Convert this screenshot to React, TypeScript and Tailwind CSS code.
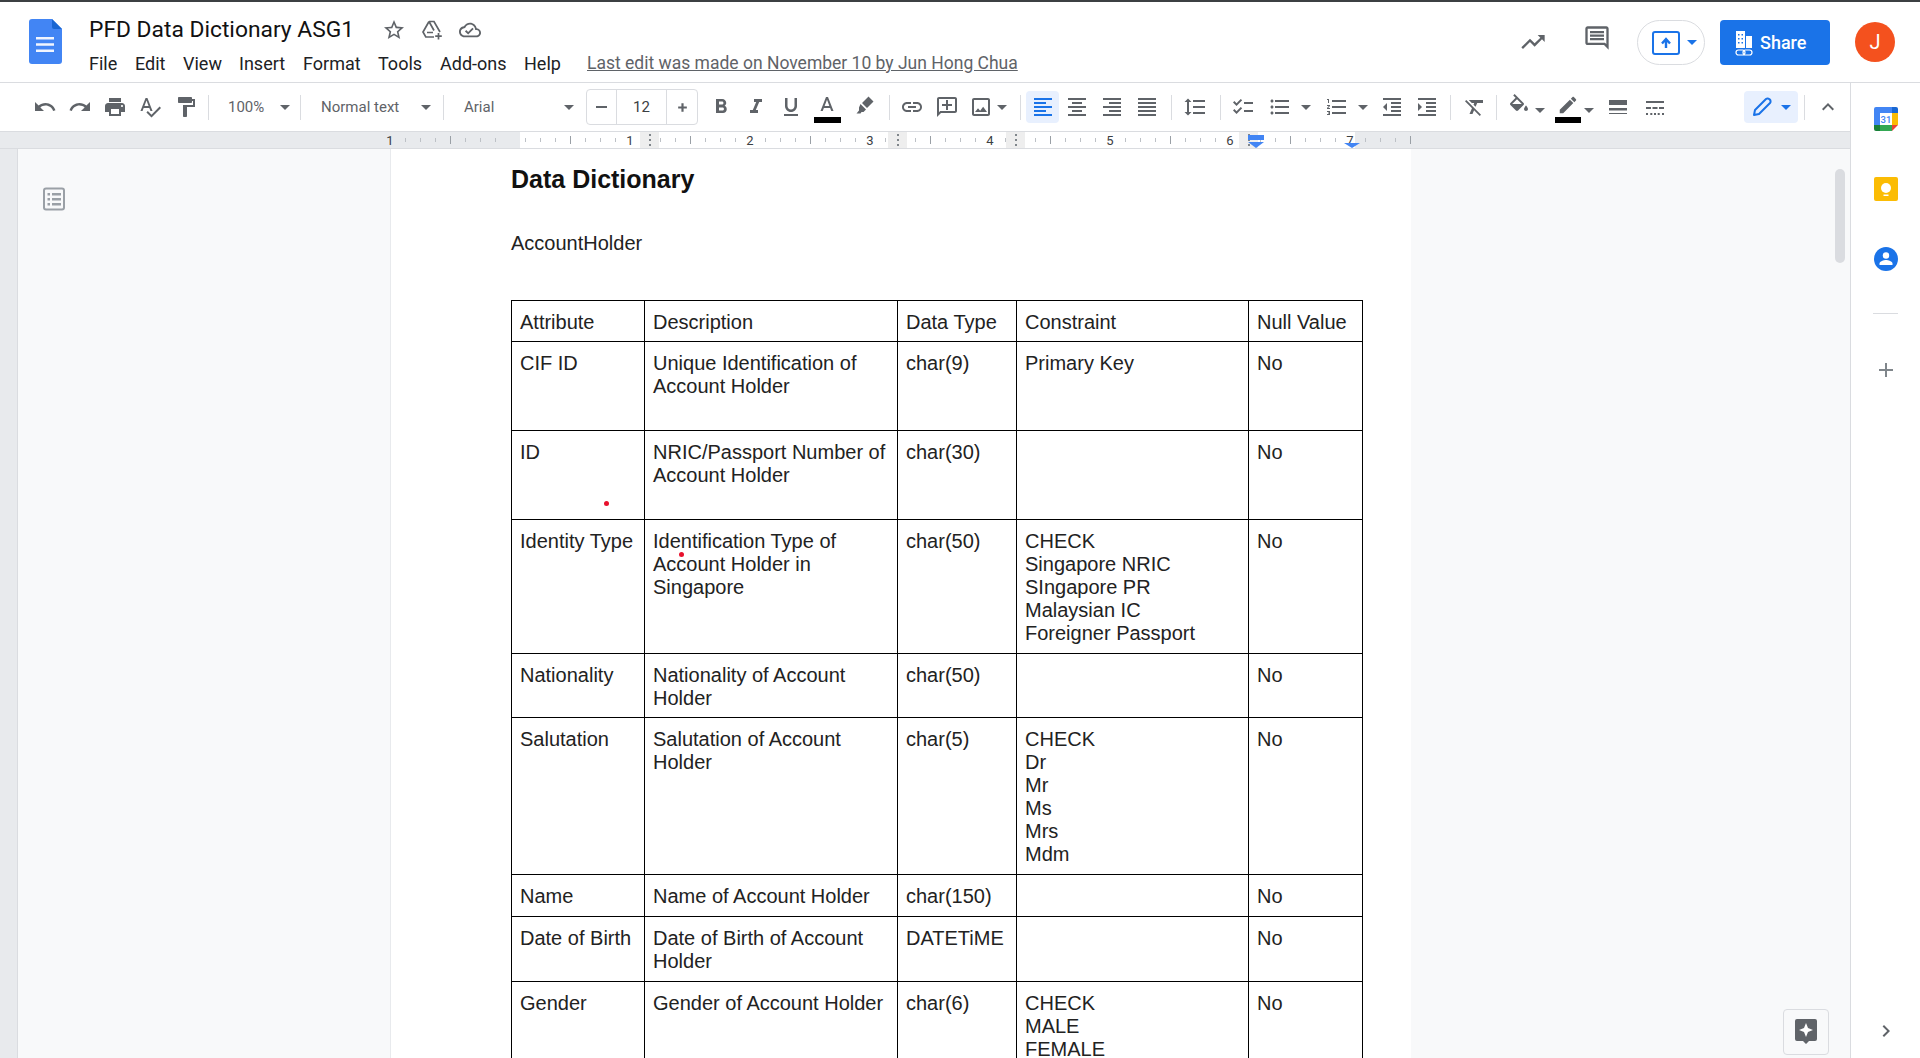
import React from "react";

const I = ({ d, c = "#5f6368", s = 24 }: { d: string; c?: string; s?: number }) => (
  <svg width={s} height={s} viewBox="0 0 24 24" fill={c}><path d={d} /></svg>
);

const P = {
  undo: "M12.5 8c-2.65 0-5.05.99-6.9 2.6L2 7v9h9l-3.62-3.62c1.39-1.16 3.16-1.88 5.12-1.88 3.54 0 6.55 2.31 7.6 5.5l2.37-.78C21.08 11.03 17.15 8 12.5 8z",
  redo: "M18.4 10.6C16.55 8.99 14.15 8 11.5 8c-4.65 0-8.58 3.03-9.96 7.22L3.9 16c1.05-3.19 4.05-5.5 7.6-5.5 1.95 0 3.73.72 5.12 1.88L13 16h9V7l-3.6 3.6z",
  print: "M19 8H5c-1.66 0-3 1.34-3 3v6h4v4h12v-4h4v-6c0-1.66-1.34-3-3-3zm-3 11H8v-5h8v5zm3-7c-.55 0-1-.45-1-1s.45-1 1-1 1 .45 1 1-.45 1-1 1zm-1-9H6v4h12V3z",
  spell: "M12.45 16h2.09L9.43 3H7.57L2.46 16h2.09l1.12-3h5.64l1.14 3zm-6.02-5L8.5 5.48 10.57 11H6.43zm15.16.59l-8.09 8.09L9.83 16l-1.41 1.41 5.09 5.09L23 13l-1.41-1.41z",
  paint: "M18 4V3c0-.55-.45-1-1-1H5c-.55 0-1 .45-1 1v4c0 .55.45 1 1 1h12c.55 0 1-.45 1-1V6h1v4H9v11c0 .55.45 1 1 1h2c.55 0 1-.45 1-1v-9h8V4h-3z",
  bold: "M15.6 10.79c.97-.67 1.65-1.77 1.65-2.79 0-2.26-1.75-4-4-4H7v14h7.04c2.09 0 3.71-1.7 3.71-3.79 0-1.52-.86-2.82-2.15-3.42zM10 6.5h3c.83 0 1.5.67 1.5 1.5s-.67 1.5-1.5 1.5h-3v-3zm3.5 9H10v-3h3.5c.83 0 1.5.67 1.5 1.5s-.67 1.5-1.5 1.5z",
  italic: "M10 4v3h2.21l-3.42 8H6v3h8v-3h-2.21l3.42-8H18V4z",
  under: "M12 17c3.31 0 6-2.69 6-6V3h-2.5v8c0 1.93-1.57 3.5-3.5 3.5S8.5 12.93 8.5 11V3H6v8c0 3.31 2.69 6 6 6zm-7 2v2h14v-2H5z",
  a: "M11 3L5.5 17h2.25l1.12-3h6.25l1.12 3h2.25L13 3h-2zm-1.38 9L12 5.67 14.38 12H9.62z",
  marker: "M15.5 3.5l5 5-6.5 6.5-5-5zM7.5 11l5.5 5.500-2.500 2.500H8.500L7.500 20.500H3.500L6 17.500V14.500z",
  link: "M3.9 12c0-1.71 1.39-3.1 3.1-3.1h4V7H7c-2.76 0-5 2.24-5 5s2.24 5 5 5h4v-1.9H7c-1.71 0-3.1-1.39-3.1-3.1zM8 13h8v-2H8v2zm9-6h-4v1.9h4c1.71 0 3.1 1.39 3.1 3.1s-1.39 3.1-3.1 3.1h-4V17h4c2.76 0 5-2.24 5-5s-2.24-5-5-5z",
  addc: "M20 2H4c-1.1 0-2 .9-2 2v18l4-4h14c1.1 0 2-.9 2-2V4c0-1.1-.9-2-2-2zm0 14H5.170L4 17.170V4h16v12zM11 5h2v4h4v2h-4v4h-2v-4H7V9h4z",
  img: "M19 5v14H5V5h14m0-2H5c-1.1 0-2 .9-2 2v14c0 1.1.9 2 2 2h14c1.1 0 2-.9 2-2V5c0-1.1-.9-2-2-2zM14.140 11.860l-3 3.870L9 13.140 6 17h12l-3.860-5.140z",
  left: "M15 15H3v2h12v-2zm0-8H3v2h12V7zM3 13h18v-2H3v2zm0 8h18v-2H3v2zM3 3v2h18V3H3z",
  center: "M7 15v2h10v-2H7zm-4 6h18v-2H3v2zm0-8h18v-2H3v2zm4-6v2h10V7H7zM3 3v2h18V3H3z",
  right: "M3 21h18v-2H3v2zm6-4h12v-2H9v2zm-6-4h18v-2H3v2zm6-4h12V7H9v2zM3 3v2h18V3H3z",
  just: "M3 21h18v-2H3v2zm0-4h18v-2H3v2zm0-4h18v-2H3v2zm0-4h18V7H3v2zm0-6v2h18V3H3z",
  spacing: "M6 7h2.5L5 3.5 1.500 7H4v10H1.500L5 20.500 8.500 17H6V7zm4-2v2h12V5H10zm0 14h12v-2H10v2zm0-6h12v-2H10v2z",
  check: "M22 7h-9v2h9V7zm0 8h-9v2h9v-2zM5.540 11L2 7.460l1.410-1.410 2.120 2.120 4.240-4.240 1.410 1.410L5.540 11zm0 8L2 15.460l1.410-1.410 2.120 2.120 4.240-4.240 1.410 1.410L5.540 19z",
  bullet: "M4 10.500c-.83 0-1.500.67-1.500 1.500s.67 1.500 1.500 1.500 1.500-.67 1.500-1.500-.67-1.500-1.500-1.500zm0-6c-.83 0-1.500.67-1.500 1.500S3.170 7.500 4 7.500 5.500 6.830 5.500 6 4.830 4.500 4 4.500zm0 12c-.83 0-1.500.68-1.500 1.500s.68 1.500 1.500 1.500 1.500-.68 1.500-1.500-.67-1.500-1.500-1.500zM7 19h14v-2H7v2zm0-6h14v-2H7v2zm0-8v2h14V5H7z",
  num: "M2 17h2v.5H3v1h1v.5H2v1h3v-4H2v1zm1-9h1V4H2v1h1v3zm-1 3h1.800L2 13.100v.9h3v-1H3.200L5 10.900V10H2v1zm5-6v2h14V5H7zm0 14h14v-2H7v2zm0-6h14v-2H7v2z",
  indd: "M11 17h10v-2H11v2zm-8-5l4 4V8l-4 4zm0 9h18v-2H3v2zM3 3v2h18V3H3zm8 6h10V7H11v2zm0 4h10v-2H11v2z",
  indi: "M3 21h18v-2H3v2zM3 8v8l4-4-4-4zm8 9h10v-2H11v2zM3 3v2h18V3H3zm8 6h10V7H11v2zm0 4h10v-2H11v2z",
  clear: "M3.270 5L2 6.270l6.970 6.970L6.500 19h3l1.570-3.660L16.730 21 18 19.730 3.550 5.270 3.270 5zM6 5v.18L8.820 8h2.400l-.72 1.680 2.100 2.100L14.210 8H20V5H6z",
  fill: "M16.560 8.940L7.620 0 6.210 1.410l2.380 2.380-5.150 5.150c-.59.59-.59 1.540 0 2.120l5.500 5.500c.29.29.68.44 1.060.44s.77-.15 1.060-.44l5.500-5.500c.59-.58.59-1.530 0-2.120zM5.210 10L10 5.210 14.790 10H5.210zM19 11.500s-2 2.170-2 3.500c0 1.100.9 2 2 2s2-.9 2-2c0-1.330-2-3.500-2-3.500z",
  pencil: "M3 17.250V21h3.750L17.810 9.940l-3.750-3.750L3 17.250zM20.710 7.040c.39-.39.39-1.020 0-1.410l-2.340-2.340c-.39-.39-1.020-.39-1.410 0l-1.830 1.830 3.750 3.750 1.830-1.830z",
  weight: "M3 5h18v5H3zM3 13h18v2.500H3zM3 18h18v1H3z",
  dash: "M3 6h18v2H3zM3 12h5v2H3zM9.500 12h5v2h-5zM16 12h5v2h-5zM3 18h2v2H3zM7.300 18h2v2h-2zM11 18h2v2h-2zM14.700 18h2v2h-2zM19 18h2v2h-2z",
  up: "M7.410 15.410L12 10.830l4.590 4.580L18 14l-6-6-6 6z",
  star: "M22 9.240l-7.190-.62L12 2 9.190 8.630 2 9.240l5.460 4.730L5.820 21 12 17.270 18.180 21l-1.630-7.030L22 9.240zM12 15.400l-3.760 2.270 1-4.280-3.320-2.880 4.380-.38L12 6.100l1.710 4.040 4.380.38-3.320 2.880 1 4.280L12 15.400z",
  cloud: "M19.350 10.040C18.670 6.590 15.640 4 12 4 9.110 4 6.600 5.640 5.350 8.040 2.340 8.360 0 10.910 0 14c0 3.310 2.690 6 6 6h13c2.760 0 5-2.240 5-5 0-2.640-2.050-4.780-4.650-4.960zM19 18H6c-2.210 0-4-1.790-4-4 0-2.050 1.530-3.760 3.560-3.970l1.070-.11.5-.95C8.080 7.140 9.940 6 12 6c2.620 0 4.880 1.860 5.390 4.430l.3 1.500 1.530.11c1.560.1 2.780 1.410 2.780 2.960 0 1.650-1.350 3-3 3zm-9-3.820l-2.090-2.090L6.500 13.500 10 17l6.010-6.010-1.410-1.410z",
  trend: "M16 6l2.290 2.290-4.880 4.880-4-4L2 16.590 3.410 18l6-6 4 4 6.300-6.290L22 12V6z",
  comment: "M21.990 4c0-1.100-.89-2-1.990-2H4c-1.100 0-2 .9-2 2v12c0 1.100.9 2 2 2h14l4 4-.01-18zM20 4v13.170L18.830 16H4V4h16zM6 12h12v2H6zm0-3h12v2H6zm0-3h12v2H6z",
};

const Slot = ({ className = "", children }: { className?: string; children: React.ReactNode }) => (
  <div className={`flex items-center justify-center shrink-0 ${className}`}>{children}</div>
);
const Sep = ({ className = "" }: { className?: string }) => (
  <div className={`w-px h-[25px] bg-[#dadce0] shrink-0 ${className}`} />
);
const Arrow = ({ className = "", c = "#5f6368" }: { className?: string; c?: string }) => (
  <div className={`w-[10px] shrink-0 ${className}`}>
    <svg width="10" height="5" viewBox="0 0 10 5" fill={c} className="block"><path d="M0 0h10L5 5z" /></svg>
  </div>
);

const Header = () => (
  <header className="h-[83px] shrink-0 flex border-t-2 border-b border-t-[#3c4043] border-b-[#dadce0] bg-white font-['Roboto',sans-serif]">
    <div className="w-[89px] pl-[29px] pt-[17px] shrink-0">
      <svg width="33" height="45" viewBox="0 0 33 45">
        <path d="M3 0h20l10 10v32a3 3 0 0 1-3 3H3a3 3 0 0 1-3-3V3a3 3 0 0 1 3-3z" fill="#4285f4" />
        <path d="M23 0l10 10H25a2 2 0 0 1-2-2z" fill="#1a66d2" />
        <path d="M7 18h18v2.600H7zM7 24.200h18v2.600H7zM7 30.400h18v2.600H7z" fill="#f1f5fe" />
      </svg>
    </div>
    <div className="flex flex-col">
      <div className="flex items-center h-[29px] mt-[13px]">
        <span className="text-[22.8px] leading-[29px] text-[#111] w-[290px] whitespace-nowrap">PFD Data Dictionary ASG1</span>
        <Slot className="w-[30px]"><I d={P.star} s={24} /></Slot>
        <Slot className="w-[24px] ml-[11px]">
          <svg width="24" height="24" viewBox="0 0 24 24" fill="none" stroke="#5f6368" strokeWidth="1.700">
            <path d="M9 3.500h5l6 10.500M9 3.500L3 14l2.800 5H14M9 3.500l5 9M7 14.500h6" />
            <path d="M18.500 15v6.500M15.200 18.200h6.600" />
          </svg>
        </Slot>
        <Slot className="w-[24px] ml-[14px]"><I d={P.cloud} s={22} /></Slot>
      </div>
      <nav className="flex items-center h-[24px] mt-[7px] text-[18px] text-[#202124]">
        <span className="w-[46px]">File</span>
        <span className="w-[48px]">Edit</span>
        <span className="w-[56px]">View</span>
        <span className="w-[64px]">Insert</span>
        <span className="w-[75px]">Format</span>
        <span className="w-[62px]">Tools</span>
        <span className="w-[84px]">Add-ons</span>
        <span className="w-[63px]">Help</span>
        <span className="underline text-[#5f6368] text-[17.5px]">Last edit was made on November 10 by Jun Hong Chua</span>
      </nav>
    </div>
    <div className="ml-auto flex items-start">
      <Slot className="w-[28px] mt-[26px] mr-[36px]"><I d={P.trend} s={28} /></Slot>
      <Slot className="w-[28px] mt-[21px] mr-[26px]"><I d={P.comment} s={30} /></Slot>
      <div className="w-[68px] h-[45px] mt-[18px] rounded-full border border-[#dadce0] flex items-center pl-[14px]">
        <svg width="28" height="24" viewBox="0 0 28 24">
          <rect x="1" y="1" width="26" height="22" rx="2" fill="none" stroke="#1a73e8" strokeWidth="2" />
          <path d="M14 17v-7M10 12.500L14 8l4 4.500" fill="none" stroke="#1a73e8" strokeWidth="2.400" />
        </svg>
        <Arrow className="ml-[7px]" c="#1a73e8" />
      </div>
      <button className="w-[110px] h-[45px] mt-[18px] ml-[15px] rounded-[4px] bg-[#1a73e8] flex items-center pl-[15px] text-white text-[18px] font-medium">
        <svg width="18" height="26" viewBox="0 0 18 26" fill="#fff" className="mr-[7px]">
          <path d="M1 1h9v17H1zM11 6h6v12h-6z" />
          <path d="M3 4h1.500v1.500H3zM6.500 4H8v1.500H6.500zM3 8h1.500v1.500H3zM6.500 8H8v1.500H6.500zM3 12h1.500v1.500H3zM6.500 12H8v1.500H6.500z" fill="#1a73e8" />
          <rect x="1" y="20" width="9" height="5" rx="2.500" fill="none" stroke="#fff" strokeWidth="1.200" />
          <rect x="8" y="20" width="9" height="5" rx="2.500" fill="none" stroke="#fff" strokeWidth="1.200" />
        </svg>
        Share
      </button>
      <div className="w-[40px] h-[40px] mt-[20px] ml-[25px] mr-[25px] rounded-full bg-[#f4511e] text-white flex items-center justify-center text-[20px]">J</div>
    </div>
  </header>
);

const OutlinePen = () => (
  <svg width="24" height="24" viewBox="0 0 24 24" fill="none" stroke="#1a73e8" strokeWidth="2">
    <path d="M4 20l1-5L16 4a2.500 2.500 0 0 1 3.600 0.400 2.500 2.500 0 0 1 .4 3.600L9 19z" strokeLinejoin="round" />
  </svg>
);

const Toolbar = () => (
  <div className="h-[48px] shrink-0 flex items-center pl-[27px] bg-white font-['Roboto',sans-serif] text-[15px] text-[#5f6368]">
    <Slot className="w-[36px]"><I d={P.undo} /></Slot>
    <Slot className="w-[34px]"><I d={P.redo} /></Slot>
    <Slot className="w-[36px]"><I d={P.print} /></Slot>
    <Slot className="w-[34px]"><I d={P.spell} /></Slot>
    <Slot className="w-[38px]"><I d={P.paint} /></Slot>
    <Sep className="ml-[3px]" />
    <div className="w-[91px] shrink-0 pl-[19px] pr-[10px] flex items-center justify-between"><span>100%</span><Arrow /></div>
    <Sep />
    <div className="w-[142px] shrink-0 pl-[20px] pr-[12px] flex items-center justify-between"><span>Normal text</span><Arrow /></div>
    <Sep />
    <div className="w-[142px] shrink-0 pl-[20px] pr-[12px] flex items-center justify-between"><span>Arial</span><Arrow /></div>
    <div className="w-[112px] h-[36px] shrink-0 flex items-center border border-[#dadce0] rounded-[4px] text-[#3c4043]">
      <Slot className="w-[30px] h-full border-r border-[#dadce0]"><div className="w-[11px] h-[2.500px] bg-[#5f6368]" /></Slot>
      <Slot className="w-[50px] h-full border-r border-[#dadce0]">12</Slot>
      <Slot className="flex-1 h-full"><I d="M20 14h-6v6h-4v-6H4v-4h6V4h4v6h6v4z" s={13} /></Slot>
    </div>
    <Slot className="w-[34px] ml-[6px]"><I d={P.bold} /></Slot>
    <Slot className="w-[36px]"><I d={P.italic} /></Slot>
    <Slot className="w-[34px]"><I d={P.under} /></Slot>
    <div className="w-[38px] h-[38px] pt-[6px] shrink-0 flex flex-col items-center">
      <div className="h-[24px]"><I d={P.a} /></div>
      <div className="w-[27px] h-[6px] bg-black -mt-[1px]" />
    </div>
    <Slot className="w-[38px] -mt-[4px]"><I d={P.marker} /></Slot>
    <Sep className="ml-[5px]" />
    <Slot className="w-[44px]"><I d={P.link} /></Slot>
    <Slot className="w-[26px]"><I d={P.addc} /></Slot>
    <Slot className="w-[24px] ml-[9px]"><I d={P.img} /></Slot>
    <Arrow className="ml-[4px]" />
    <Sep className="ml-[13px]" />
    <Slot className="w-[33px] h-[32px] ml-[5px] bg-[#e8f0fe] rounded-[4px]"><I d={P.left} c="#1a73e8" /></Slot>
    <Slot className="w-[36px]"><I d={P.center} /></Slot>
    <Slot className="w-[34px]"><I d={P.right} /></Slot>
    <Slot className="w-[36px]"><I d={P.just} /></Slot>
    <Sep className="ml-[6px]" />
    <Slot className="w-[46px]"><I d={P.spacing} /></Slot>
    <Sep className="ml-[2px]" />
    <Slot className="w-[44px]"><I d={P.check} /></Slot>
    <Slot className="w-[30px]"><I d={P.bullet} /></Slot>
    <Arrow className="ml-[6px]" />
    <Slot className="w-[28px] ml-[12px]"><I d={P.num} /></Slot>
    <Arrow className="ml-[7px]" />
    <Slot className="w-[28px] ml-[10px]"><I d={P.indd} /></Slot>
    <Slot className="w-[28px] ml-[7px]"><I d={P.indi} /></Slot>
    <Sep className="ml-[9px]" />
    <Slot className="w-[40px] ml-[4px]"><I d={P.clear} /></Slot>
    <Sep className="ml-[1px]" />
    <Slot className="w-[28px] ml-[8px] -mt-[3px]"><I d={P.fill} /></Slot>
    <Arrow className="ml-[2px] mt-[6px]" />
    <div className="w-[28px] h-[38px] ml-[9px] pt-[6px] shrink-0 flex flex-col items-center">
      <div className="h-[24px]"><I d={P.pencil} s={22} /></div>
      <div className="w-[26px] h-[6px] bg-black -mt-[1px]" />
    </div>
    <Arrow className="ml-[2px] mt-[6px]" />
    <Slot className="w-[28px] ml-[10px]"><I d={P.weight} /></Slot>
    <Slot className="w-[28px] ml-[9px]"><I d={P.dash} /></Slot>
    <div className="w-[54px] h-[32px] ml-[75px] pl-[6px] bg-[#e8f0fe] rounded-[4px] flex items-center shrink-0">
      <OutlinePen />
      <Arrow className="ml-[7px]" c="#1a73e8" />
    </div>
    <Sep className="ml-[6px]" />
    <Slot className="w-[28px] ml-[9px]"><I d={P.up} /></Slot>
  </div>
);

const ticks: { x: number; long: boolean }[] = [];
for (let x = 405; x <= 1410; x += 15) {
  if ((x - 390) % 120 === 0) continue;
  ticks.push({ x, long: (x - 390) % 60 === 0 });
}
const handles = [640, 888, 1006, 1239];
const Ruler = () => (
  <div className="h-[18px] shrink-0 border-y border-[#dadce0] bg-[#e8eaed]">
    <svg width="1850" height="16" className="block">
      <rect x="520" y="0" width="835" height="16" fill="#fff" />
      {ticks.map((t) => (
        <rect key={t.x} x={t.x} y={t.long ? 4 : 6} width="1" height={t.long ? 8 : 4} fill={t.long ? "#9aa0a6" : "#bdc1c6"} />
      ))}
      {handles.map((h) => (
        <g key={h}>
          <rect x={h} y="0" width="19" height="16" fill="#eeeeee" />
          <path d={`M${h + 9} 2h2v2h-2zM${h + 9} 7h2v2h-2zM${h + 9} 12h2v2h-2z`} fill="#80868b" />
        </g>
      ))}
      {[[390, "1"], [630, "1"], [750, "2"], [870, "3"], [990, "4"], [1110, "5"], [1230, "6"], [1350, "7"]].map(([x, t]) => (
        <text key={String(x) + t} x={x as number} y="13" textAnchor="middle" fontSize="13" fontFamily="Roboto, sans-serif" fill="#3c4043">{t}</text>
      ))}
      <path d="M1248 3h16v5h-16z" fill="#4285f4" />
      <path d="M1248 10h16l-8 6zM1344 11h16l-8 5z" fill="#4285f4" />
    </svg>
  </div>
);

type Row = { h: string; c: string[][] };
const rows: Row[] = [
  { h: "h-[41px]", c: [["Attribute"], ["Description"], ["Data Type"], ["Constraint"], ["Null Value"]] },
  { h: "h-[89px]", c: [["CIF ID"], ["Unique Identification of Account Holder"], ["char(9)"], ["Primary Key"], ["No"]] },
  { h: "h-[89px]", c: [["ID"], ["NRIC/Passport Number of Account Holder"], ["char(30)"], [""], ["No"]] },
  { h: "h-[134px]", c: [["Identity Type"], ["Identification Type of Account Holder in Singapore"], ["char(50)"], ["CHECK", "Singapore NRIC", "SIngapore PR", "Malaysian IC", "Foreigner Passport"], ["No"]] },
  { h: "h-[64px]", c: [["Nationality"], ["Nationality of Account Holder"], ["char(50)"], [""], ["No"]] },
  { h: "h-[157px]", c: [["Salutation"], ["Salutation of Account Holder"], ["char(5)"], ["CHECK", "Dr", "Mr", "Ms", "Mrs", "Mdm"], ["No"]] },
  { h: "h-[42px]", c: [["Name"], ["Name of Account Holder"], ["char(150)"], [""], ["No"]] },
  { h: "h-[65px]", c: [["Date of Birth"], ["Date of Birth of Account Holder"], ["DATETiME"], [""], ["No"]] },
  { h: "h-[110px]", c: [["Gender"], ["Gender of Account Holder"], ["char(6)"], ["CHECK", "MALE", "FEMALE"], ["No"]] },
];

const Page = () => (
  <div className="relative w-[1021px] shrink-0 bg-white border-l border-[#e8eaed] pl-[120px] pt-[16px] font-['Liberation_Sans',Arial,sans-serif] text-[#222]">
    <h1 className="text-[25px] leading-[29px] font-bold text-[#111]">Data Dictionary</h1>
    <p className="text-[20px] leading-[23px] mt-[38px]">AccountHolder</p>
    <table className="mt-[45px] w-[851px] table-fixed border-collapse text-[20px] leading-[23px]">
      <colgroup>
        <col className="w-[133px]" />
        <col className="w-[253px]" />
        <col className="w-[119px]" />
        <col className="w-[232px]" />
        <col className="w-[114px]" />
      </colgroup>
      <tbody>
        {rows.map((r, i) => (
          <tr key={i}>
            {r.c.map((cell, j) => (
              <td key={j} className={`${r.h} border border-black align-top pl-[8px] pr-[6px] pt-[10px]`}>
                {cell.map((l, k) => <div key={k}>{l}</div>)}
              </td>
            ))}
          </tr>
        ))}
      </tbody>
    </table>
    <div className="absolute left-[213px] top-[352px] w-[5px] h-[5px] rounded-full bg-[#e8112d]" />
    <div className="absolute left-[288px] top-[403px] w-[5px] h-[5px] rounded-full bg-[#e8112d]" />
  </div>
);

const Content = () => (
  <div className="flex-1 min-h-0 flex overflow-hidden bg-[#f8f9fa]">
    <div className="w-[18px] shrink-0 bg-[#e8eaed] border-r border-[#dadce0]" />
    <div className="w-[372px] shrink-0 pl-[24px] pt-[38px]">
      <svg width="24" height="24" viewBox="0 0 24 24" fill="none">
        <rect x="2" y="1.500" width="20" height="21" rx="2" stroke="#9aa0a6" strokeWidth="2" />
        <path d="M5.500 6h2.500v2.500H5.500zM10 6h9v2.500h-9zM5.500 11h2.500v2.500H5.500zM10 11h9v2.500h-9zM5.500 16h2.500v2.500H5.500zM10 16h9v2.500h-9z" fill="#9aa0a6" />
      </svg>
    </div>
    <Page />
    <div className="flex-1 relative">
      <div className="absolute left-[424px] top-[20px] w-[10px] h-[94px] rounded-[5px] bg-[#dadce0]" />
      <div className="absolute left-[372px] bottom-[3px] w-[46px] h-[46px] rounded-[4px] border border-[#dadce0] bg-[#f8f9fa] flex items-center justify-center">
        <svg width="24" height="28" viewBox="0 0 24 28">
          <path d="M3 1h18a2 2 0 0 1 2 2v18a2 2 0 0 1-2 2h-6l-3 3-3-3H3a2 2 0 0 1-2-2V3a2 2 0 0 1 2-2z" fill="#5f6368" />
          <path d="M12 5l2 5 5 2-5 2-2 5-2-5-5-2 5-2z" fill="#fff" />
        </svg>
      </div>
    </div>
  </div>
);

const SidePanel = () => (
  <aside className="w-[70px] shrink-0 border-l border-[#dadce0] bg-white flex flex-col items-center pt-[24px]">
    <svg width="24" height="24" viewBox="0 0 24 24">
      <rect width="24" height="24" rx="2" fill="#fff" />
      <path d="M2 0h16v6H6v12H0V2a2 2 0 0 1 2-2z" fill="#4285f4" />
      <path d="M18 0h4a2 2 0 0 1 2 2v4h-6z" fill="#1967d2" />
      <path d="M18 6h6v12h-6z" fill="#fbbc04" />
      <path d="M6 18h12v6H6z" fill="#34a853" />
      <path d="M0 18h6v6H2a2 2 0 0 1-2-2z" fill="#188038" />
      <path d="M18 18h6l-6 6z" fill="#ea4335" />
      <text x="12" y="16" textAnchor="middle" fontSize="9.500" fontWeight="500" fontFamily="Roboto, sans-serif" fill="#4285f4">31</text>
    </svg>
    <svg width="24" height="24" viewBox="0 0 24 24" className="mt-[46px]">
      <rect width="24" height="24" rx="2" fill="#fbbc04" />
      <circle cx="12" cy="11" r="5" fill="#fff" />
      <path d="M9.500 17.500h5V19h-5z" fill="#fff" />
    </svg>
    <svg width="24" height="24" viewBox="0 0 24 24" className="mt-[46px]">
      <circle cx="12" cy="12" r="12" fill="#1a73e8" />
      <circle cx="12" cy="8.500" r="3.200" fill="#fff" />
      <path d="M5.500 16.500c0-2.300 4.300-3.500 6.500-3.500s6.500 1.200 6.500 3.500V18h-13z" fill="#fff" />
    </svg>
    <div className="w-[25px] h-px bg-[#dadce0] mt-[42px]" />
    <div className="mt-[44px] h-[20px]"><I d="M19 13h-6v6h-2v-6H5v-2h6V5h2v6h6v2z" c="#80868b" s={24} /></div>
    <div className="mt-auto mb-[15px]"><I d="M10 6L8.590 7.410 13.170 12l-4.580 4.590L10 18l6-6z" c="#5f6368" s={24} /></div>
  </aside>
);

export default function App() {
  return (
    <div className="w-[1920px] h-[1058px] overflow-hidden flex flex-col bg-white">
      <Header />
      <div className="flex-1 min-h-0 flex">
        <div className="w-[1850px] shrink-0 flex flex-col min-h-0">
          <Toolbar />
          <Ruler />
          <Content />
        </div>
        <SidePanel />
      </div>
    </div>
  );
}
